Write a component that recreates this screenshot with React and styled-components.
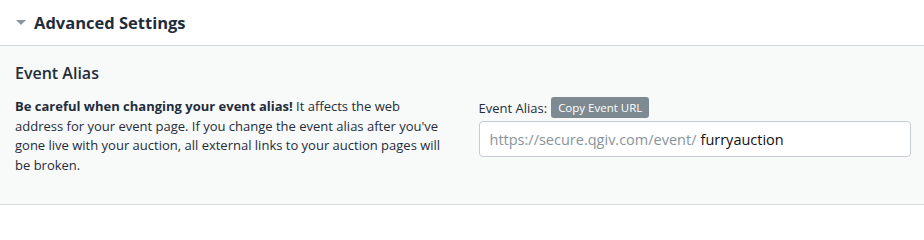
import styled, { createGlobalStyle } from 'styled-components';

const GlobalStyle = createGlobalStyle`
  html, body {
    margin: 0;
    padding: 0;
    background: #ffffff;
  }
  body {
    font-family: "Open Sans", "Liberation Sans", sans-serif;
    color: #1f2d3b;
  }
`;

const Panel = styled.section`
  width: 924px;
  border-bottom: 1px solid #d8dde0;
`;

const Header = styled.div`
  display: flex;
  align-items: center;
  gap: 8px;
  height: 46px;
  padding: 0 16px 1px;
  background: #ffffff;
  border-bottom: 1px solid #d3d9dd;
  box-sizing: border-box;
`;

const Caret = styled.span`
  width: 0;
  height: 0;
  border-left: 5px solid transparent;
  border-right: 5px solid transparent;
  border-top: 5px solid #8a969d;
  margin-top: 1px;
`;

const HeaderTitle = styled.h2`
  margin: 0;
  font-size: 16.5px;
  font-weight: 700;
  color: #1f2d3b;
`;

const Body = styled.div`
  background: #f8f9f9;
  padding: 16px 13px 29px 15px;
`;

const SectionTitle = styled.h3`
  margin: 0 0 13px;
  font-size: 16px;
  font-weight: 600;
  color: #1f2d3b;
`;

const Columns = styled.div`
  display: grid;
  grid-template-columns: 1fr 1fr;
  gap: 31px;
`;

const Note = styled.p`
  margin: 0;
  font-size: 13px;
  line-height: 19.5px;
  color: #1f2d3b;

  strong {
    font-weight: 700;
  }
`;

const Field = styled.div`
  display: flex;
  flex-direction: column;
  gap: 3px;
`;

const LabelRow = styled.div`
  display: flex;
  align-items: center;
  gap: 4px;
`;

const Label = styled.label`
  font-size: 13px;
  color: #1f2d3b;
`;

const CopyButton = styled.button`
  font-family: inherit;
  font-size: 11.5px;
  color: #ffffff;
  background: #7d8a92;
  border: none;
  border-radius: 3px;
  padding: 4px 7px;
  line-height: 13px;
  cursor: pointer;
`;

const InputBox = styled.div`
  display: flex;
  align-items: center;
  height: 36px;
  padding: 0 10px;
  background: #ffffff;
  border: 1px solid #c5ccd1;
  border-radius: 4px;
  box-sizing: border-box;
  font-size: 14.5px;
`;

const Prefix = styled.span`
  color: #87949b;
  margin-right: 4px;
`;

const Value = styled.span`
  color: #111111;
`;

export default function App() {
  return (
    <>
      <GlobalStyle />
      <Panel>
        <Header>
          <Caret />
          <HeaderTitle>Advanced Settings</HeaderTitle>
        </Header>
        <Body>
          <SectionTitle>Event Alias</SectionTitle>
          <Columns>
            <Note>
              <strong>Be careful when changing your event alias!</strong> It affects the web
              address for your event page. If you change the event alias after you've gone
              live with your auction, all external links to your auction pages will be broken.
            </Note>
            <Field>
              <LabelRow>
                <Label>Event Alias:</Label>
                <CopyButton>Copy Event URL</CopyButton>
              </LabelRow>
              <InputBox>
                <Prefix>https://secure.qgiv.com/event/</Prefix>
                <Value>furryauction</Value>
              </InputBox>
            </Field>
          </Columns>
        </Body>
      </Panel>
    </>
  );
}
